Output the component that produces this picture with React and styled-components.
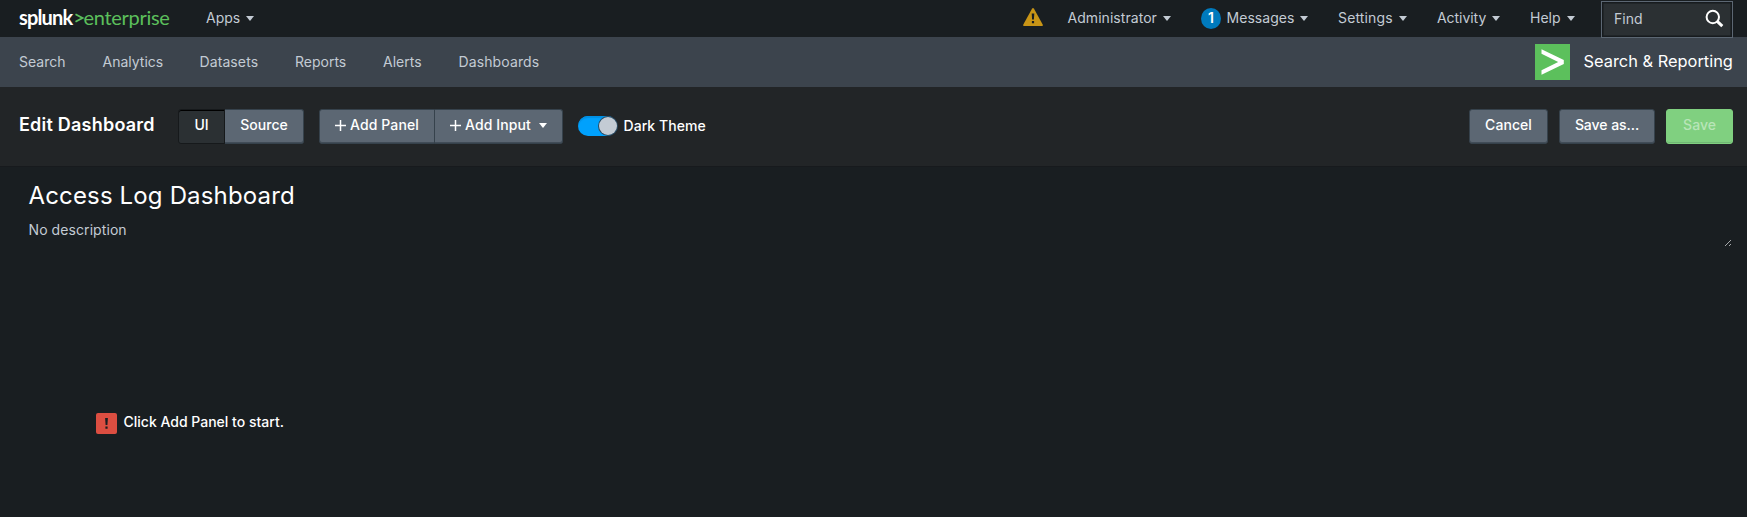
import React from "react";
import styled, { createGlobalStyle, css } from "styled-components";

const GlobalStyle = createGlobalStyle`
  *, *::before, *::after { box-sizing: border-box; }
  body {
    margin: 0;
    background: #191e21;
    color: #c3cbd4;
    font: 400 14px/20px Inter, "Liberation Sans", sans-serif;
  }
`;

const Page = styled.div`
  width: 100%;
  min-width: 1747px;
  height: 517px;
  display: flex;
  flex-direction: column;
  overflow: hidden;
`;

const TopBar = styled.header`
  height: 37px;
  flex: none;
  display: flex;
  justify-content: space-between;
  padding: 0 14px 0 19px;
  background: #191e21;
`;

const Cluster = styled.div`
  display: flex;
  align-items: flex-start;
`;

const Logo = styled.div`
  width: 187px;
  display: flex;
  padding-top: 4px;
  font: 400 20px/27px Lato, sans-serif;
  color: #5cc05c;
`;

const LogoName = styled.span`
  width: 54.5px;
  font-weight: 700;
  letter-spacing: -0.85px;
  color: #fff;
`;

const LogoChevron = styled.svg`
  width: 10px;
  height: 27px;
`;

const LogoEdition = styled.span`
  letter-spacing: -0.3px;
`;

const MenuItem = styled.div`
  width: ${(p) => p.$width}px;
  flex: none;
  display: flex;
  align-items: center;
  padding-top: 8px;
  letter-spacing: ${(p) => p.$spacing || 0}px;
  white-space: nowrap;
`;

const Caret = styled.span`
  width: 0;
  height: 0;
  margin-left: ${(p) => p.$gap || 6}px;
  border: 4px solid transparent;
  border-top: 5px solid currentColor;
  border-bottom: 0;
`;

const WarningIcon = styled.svg`
  width: 20px;
  height: 18px;
  margin: 8px 24.5px 0 0;
`;

const CountBadge = styled.span`
  width: 20px;
  height: 21px;
  margin: 8px 5.5px 0 0;
  border-radius: 50%;
  background: #007abd;
  color: #fff;
  font-weight: 600;
  line-height: 20px;
  text-align: center;
`;

const FindBox = styled.div`
  width: 132px;
  height: 37px;
  margin-top: 1px;
  padding: 7px 8px 0 12px;
  display: flex;
  align-items: flex-start;
  justify-content: space-between;
  border: 1px solid #5c6773;
  box-shadow: inset 0 0 0 1.5px #171b1e;
  background: #2b3033;
  line-height: 19px;
  position: relative;
`;

const SearchIcon = styled.svg`
  width: 19px;
  height: 19px;
`;

const AppNav = styled.nav`
  height: 50px;
  flex: none;
  display: flex;
  justify-content: space-between;
  padding: 0 14px 0 19px;
  background: #3c444d;
`;

const NavLink = styled.span`
  width: ${(p) => p.$width}px;
  padding-top: 15px;
  letter-spacing: ${(p) => p.$spacing || 0}px;
  white-space: nowrap;
`;

const AppMark = styled.svg`
  width: 35px;
  height: 36px;
  margin: 7px 13.5px 0 0;
`;

const AppName = styled.span`
  width: 149.5px;
  padding-top: 14px;
  font-size: 16.4px;
  color: #fff;
  white-space: nowrap;
`;

const EditBar = styled.section`
  height: 79px;
  flex: none;
  display: flex;
  justify-content: space-between;
  padding: 22px 14px 0 19px;
  background: #222527;
`;

const EditTitle = styled.h2`
  width: 159px;
  margin: 0;
  padding-top: 3px;
  font: 600 18px/26px Inter, sans-serif;
  letter-spacing: 0.22px;
  color: #fff;
`;

const ButtonGroup = styled.div`
  display: flex;
  margin-right: ${(p) => p.$after || 0}px;
`;

const Button = styled.button`
  width: ${(p) => p.$width}px;
  height: 35px;
  padding: 0 0 3px;
  display: flex;
  align-items: center;
  justify-content: center;
  border: 1px solid #36424c;
  border-left-width: ${(p) => (p.$joined ? 0 : 1)}px;
  border-radius: ${(p) => p.$corners || "3px"};
  box-shadow: inset 0 -1px 0 #414c57;
  background: #5c6773;
  color: #fff;
  font: 500 14px/20px Inter, sans-serif;
  letter-spacing: ${(p) => p.$spacing || 0}px;
  white-space: nowrap;
  ${(p) =>
    p.$active &&
    css`
      border-color: #16191b;
      box-shadow: inset 0 1px 0 #000;
      background: #2b3033;
    `}
  ${(p) =>
    p.$primary &&
    css`
      border-color: #80d080;
      box-shadow: inset 0 -1px 0 #70b873;
      background: #80d080;
      color: #b8e5b8;
    `}
`;

const PlusIcon = styled.svg`
  width: 11px;
  height: 11px;
  margin-right: 4px;
`;

const Switch = styled.span`
  width: 39px;
  height: 20px;
  margin: 7px 6.5px 0 0;
  padding: 1px 0;
  display: flex;
  justify-content: flex-end;
  border-radius: 10px;
  background: #00a1fd;
  box-shadow: inset 0 2px 1px #0090e4;
`;

const SwitchKnob = styled.span`
  width: 18px;
  height: 18px;
  border-radius: 50%;
  background: #c3cbd4;
  box-shadow: 0 0 0 1px #2a4a62;
`;

const SwitchLabel = styled.span`
  padding-top: 7px;
  font-weight: 500;
  letter-spacing: 0.05px;
  color: #fff;
`;

const Actions = styled.div`
  display: flex;
  gap: 11px;
`;

const Dashboard = styled.main`
  flex: 1;
  padding: 14px 15px 0 28.5px;
  border-top: 1px solid #171a1d;
`;

const DashboardTitle = styled.h1`
  margin: 0;
  font: 400 24px/30px Inter, sans-serif;
  letter-spacing: 0.15px;
  color: #fff;
`;

const Description = styled.div`
  height: 36px;
  display: flex;
  align-items: flex-end;
  justify-content: space-between;
`;

const DescriptionText = styled.span`
  align-self: flex-start;
  padding-top: 9px;
  letter-spacing: 0.08px;
`;

const ResizeGrip = styled.svg`
  width: 8px;
  height: 8px;
`;

const EmptyMessage = styled.div`
  display: flex;
  margin: 165px 0 0 67.5px;
  font-weight: 500;
  color: #fff;
`;

const AlertIcon = styled.svg`
  width: 21px;
  height: 21px;
  margin: 1px 6.5px 0 0;
`;

const Plus = () => (
  <PlusIcon viewBox="0 0 11 11">
    <path d="M5.5 0v11M0 5.5h11" stroke="#fff" strokeWidth="1.5" />
  </PlusIcon>
);

const links = [
  { label: "Search", width: 83.5 },
  { label: "Analytics", width: 97 },
  { label: "Datasets", width: 95.5, spacing: 0.1 },
  { label: "Reports", width: 88 },
  { label: "Alerts", width: 75.5 },
  { label: "Dashboards", width: 82, spacing: 0.12 },
];

const settingsMenus = [
  { label: "Settings", width: 99, spacing: 0.15 },
  { label: "Activity", width: 93, spacing: -0.05 },
  { label: "Help", width: 71 },
];

export default function App() {
  return (
    <>
      <GlobalStyle />
      <Page>
        <TopBar>
          <Cluster>
            <Logo>
              <LogoName>splunk</LogoName>
              <LogoChevron viewBox="0 0 10 27">
                <path d="M1.5 10.2 8.4 14 1.5 17.8" fill="none" stroke="#5cc05c" strokeWidth="1.8" />
              </LogoChevron>
              <LogoEdition>enterprise</LogoEdition>
            </Logo>
            <MenuItem $width={50}>Apps<Caret /></MenuItem>
          </Cluster>
          <Cluster>
            <WarningIcon viewBox="0 0 20 18">
              <path d="M9 .8Q10-.6 11 .8L19.8 16.8Q20.2 18 19 18H1Q-.2 18 .2 16.8Z" fill="#c99516" />
              <path d="M8.7 5.5h2.6l-.4 6H9.1ZM8.9 13h2.2v2.2H8.9Z" fill="#191e21" />
            </WarningIcon>
            <MenuItem $width={133.5} $spacing={0.05}>Administrator<Caret /></MenuItem>
            <CountBadge>1</CountBadge>
            <MenuItem $width={111.5} $spacing={0.05}>Messages<Caret $gap={5} /></MenuItem>
            {settingsMenus.map((m) => (
              <MenuItem key={m.label} $width={m.width} $spacing={m.spacing}>
                {m.label}
                <Caret />
              </MenuItem>
            ))}
            <FindBox>
              <span>Find</span>
              <SearchIcon viewBox="0 0 19 19">
                <circle cx="7.8" cy="8" r="6.2" fill="none" stroke="#fff" strokeWidth="2" />
                <path d="m12 12.2 5.3 5" stroke="#fff" strokeWidth="3" />
              </SearchIcon>
            </FindBox>
          </Cluster>
        </TopBar>

        <AppNav>
          <Cluster>
            {links.map((l) => (
              <NavLink key={l.label} $width={l.width} $spacing={l.spacing}>{l.label}</NavLink>
            ))}
          </Cluster>
          <Cluster>
            <AppMark viewBox="0 0 35 36">
              <path d="M0 0h35v36H0z" fill="#5cc05c" />
              <path d="M6.5 5.2 28.8 16v4L6.5 30.8v-4.6L23.2 18 6.5 9.8Z" fill="#fff" />
            </AppMark>
            <AppName>Search &amp; Reporting</AppName>
          </Cluster>
        </AppNav>

        <EditBar>
          <Cluster>
            <EditTitle>Edit Dashboard</EditTitle>
            <ButtonGroup $after={15}>
              <Button $active $width={47} $corners="3px 0 0 3px">UI</Button>
              <Button $joined $width={79} $corners="0 3px 3px 0">Source</Button>
            </ButtonGroup>
            <ButtonGroup $after={15}>
              <Button $width={116} $corners="3px 0 0 3px" $spacing={0.1}><Plus />Add Panel</Button>
              <Button $joined $width={128} $corners="0 3px 3px 0" $spacing={0.1}>
                <Plus />Add Input<Caret $gap={8} />
              </Button>
            </ButtonGroup>
            <Switch><SwitchKnob /></Switch>
            <SwitchLabel>Dark Theme</SwitchLabel>
          </Cluster>
          <Actions>
            <Button $width={79} $spacing={0.05}>Cancel</Button>
            <Button $width={96} $spacing={-0.05}>Save as...</Button>
            <Button $width={67} $primary>Save</Button>
          </Actions>
        </EditBar>

        <Dashboard>
          <DashboardTitle>Access Log Dashboard</DashboardTitle>
          <Description>
            <DescriptionText>No description</DescriptionText>
            <ResizeGrip viewBox="0 0 8 8">
              <path d="m1 7 6-6M5 7l2-2" stroke="#b5b8ba" strokeWidth=".9" />
            </ResizeGrip>
          </Description>
          <EmptyMessage>
            <AlertIcon viewBox="0 0 21 21">
              <rect width="21" height="21" rx="2" fill="#dc4e41" />
              <path d="M9.1 5h2.8l-.5 7H9.6ZM9.4 13.5h2.2v2.3H9.4Z" fill="#1a1e21" />
            </AlertIcon>
            Click Add Panel to start.
          </EmptyMessage>
        </Dashboard>
      </Page>
    </>
  );
}
